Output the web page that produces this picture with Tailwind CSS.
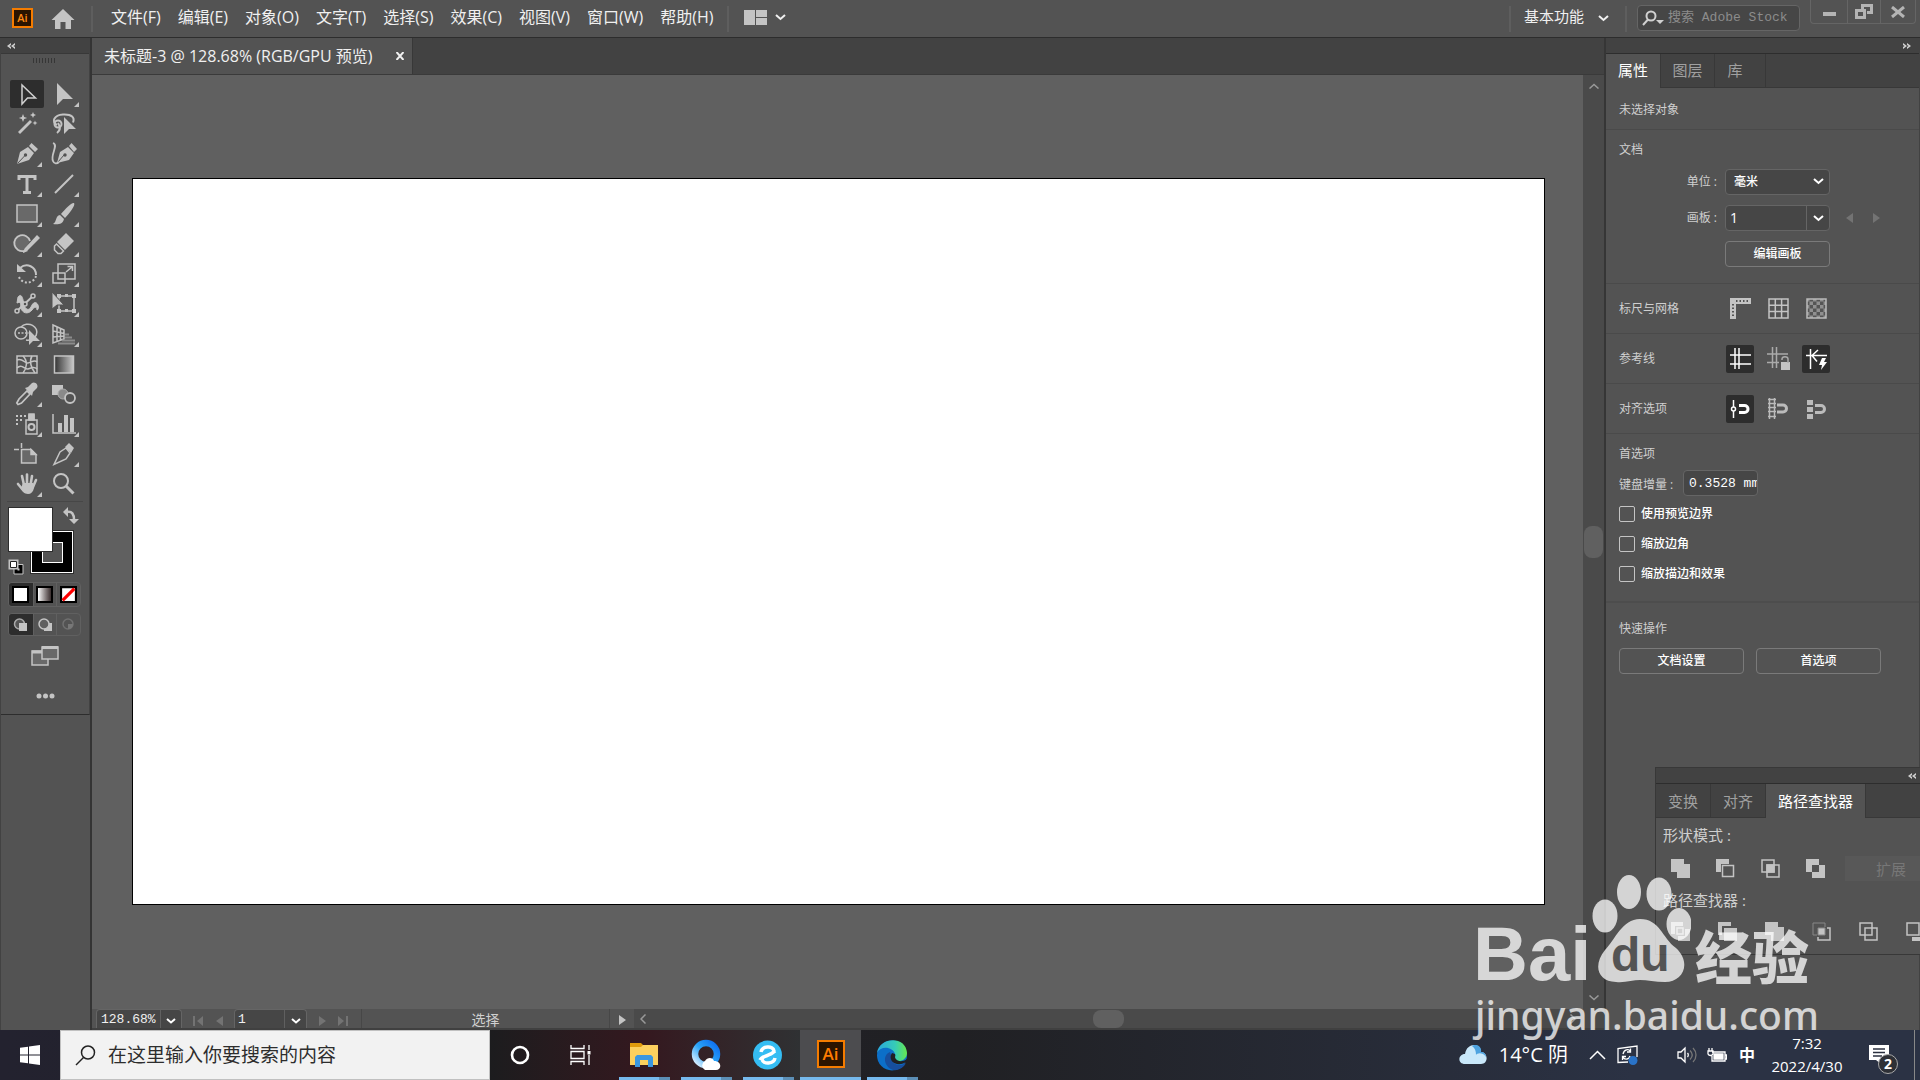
<!DOCTYPE html>
<html lang="zh-CN">
<head>
  <meta charset="UTF-8" />
  <meta name="viewport" content="width=device-width, initial-scale=1" />
  <title>未标题-3 - Adobe Illustrator</title>
  <script src="https://cdn.jsdelivr.net/npm/@tailwindcss/browser@4"></script>
</head>
<body class="h-screen overflow-hidden flex flex-col bg-[#535353] text-[#f0f0f0] font-['Open_Sans','Noto_Sans_CJK_SC',sans-serif] text-[15px] leading-5">

  <!-- Menu bar -->
  <header class="h-[38px] shrink-0 flex items-center border-b border-[#2d2d2d] bg-[#535353] relative">
    <div class="ml-3 mb-px w-[21px] h-5 border-2 border-[#f57c00] bg-[#2b1400] text-[#ff8b14] text-[11px] leading-4 font-semibold text-center">Ai</div>
    <button class="ml-[18px]" aria-label="主页">
      <svg width="24" height="22" viewBox="0 0 24 22" fill="#c4c4c4"><path d="M12 1 0.500 12H4v9h5.500v-7h5v7H20v-9h3.500z"/></svg>
    </button>
    <div class="ml-[16px] w-[2px] h-[26px] bg-[#5e5e5e]"></div>
    <nav class="ml-[18px] mb-1 flex gap-[17px] whitespace-nowrap text-base leading-5">
      <a href="#">文件(F)</a>
      <a href="#">编辑(E)</a>
      <a href="#">对象(O)</a>
      <a href="#">文字(T)</a>
      <a href="#">选择(S)</a>
      <a href="#">效果(C)</a>
      <a href="#">视图(V)</a>
      <a href="#">窗口(W)</a>
      <a href="#">帮助(H)</a>
    </nav>
    <div class="ml-[14px] w-[2px] h-[26px] bg-[#5e5e5e]"></div>
    <button class="ml-[15px] mb-[2px] flex items-center gap-2" aria-label="排列文档">
      <svg width="23" height="15" viewBox="0 0 23 15" fill="#c4c4c4"><path d="M0 0h11v15H0zM12 0h11v7H12zM12 8h11v7H12z"/></svg>
      <svg width="11" height="7" viewBox="0 0 11 7" fill="none" stroke="#f0f0f0" stroke-width="2"><path d="m1 1 4.500 4L10 1"/></svg>
    </button>
    <div class="ml-auto mr-[13px] w-[2px] h-[26px] bg-[#5e5e5e]"></div>
    <button class="mb-[6px] flex items-center gap-[14px]">
      <span>基本功能</span>
      <svg class="mt-[6px]" width="11" height="7" viewBox="0 0 11 7" fill="none" stroke="#f0f0f0" stroke-width="2"><path d="m1 1 4.500 4L10 1"/></svg>
    </button>
    <div class="ml-4 w-[2px] h-[26px] bg-[#5e5e5e]"></div>
    <label class="ml-[10px] mb-px w-[163px] h-[26px] flex items-center gap-1 rounded border border-[#656565] bg-[#464646] px-1">
      <svg class="shrink-0" width="22" height="16" viewBox="0 0 22 16" fill="none" stroke="#d0d0d0" stroke-width="2"><circle cx="9" cy="6" r="4.500"/><path d="M6 9.500 1 15"/><path d="M14 10h8l-4 4z" fill="#d0d0d0" stroke="none"/></svg>
      <input type="text" placeholder="搜索 Adobe Stock" class="min-w-0 flex-1 outline-none bg-transparent text-[13px] placeholder:text-[#8c8c8c] font-['Liberation_Mono','Noto_Sans_CJK_SC',monospace]" />
    </label>
    <div class="ml-[10px] mr-1 self-start flex h-6 rounded-b border border-t-0 border-[#656565]">
      <button class="w-9 flex justify-center items-center" aria-label="最小化"><span class="mt-1 w-[13px] h-1 bg-[#b4b4b4]"></span></button>
      <button class="w-[34px] flex justify-center items-center border-x border-[#656565]" aria-label="还原">
        <svg width="18" height="15" viewBox="0 0 18 15" fill="none" stroke="#b4b4b4" stroke-width="3"><path d="M7.500 5V1.500h9v7H12M1.500 6.500h8v7h-8z"/></svg>
      </button>
      <button class="w-[34px] flex justify-center items-center" aria-label="关闭">
        <svg width="14" height="12" viewBox="0 0 14 12" fill="none" stroke="#b4b4b4" stroke-width="3"><path d="m1 1 12 10M13 1 1 11"/></svg>
      </button>
    </div>
  </header>

  <div class="flex-1 min-h-0 flex relative">

    <!-- Tool panel -->
    <aside class="w-[92px] shrink-0 border-r-2 border-[#343434] bg-[#535353] flex flex-col border-l border-l-[#424242]">
      <div class="border-r border-[#424242] border-b border-b-[#2d2d2d] pb-0">
        <div class="h-4 bg-[#424242] border-b border-[#383838] flex items-center pl-[6px]">
          <svg width="8" height="6" viewBox="0 0 8 6" fill="#d0d0d0"><path d="M4 0v2L2.500 3 4 4v2L0 3zM8 0v2L6.500 3 8 4v2L4 3z"/></svg>
        </div>
        <div class="h-[25px] flex justify-center pt-1">
          <svg width="24" height="6"><path d="M0.500 0v5M3.500 0v5M6.500 0v5M9.500 0v5M12.500 0v5M15.500 0v5M18.500 0v5M21.500 0v5" stroke="#363636"/></svg>
        </div>

        <div class="grid grid-cols-2 auto-rows-[30px] px-[7px]">
          <button class="relative flex items-center justify-center" aria-label="选择工具">
            <span class="w-[34px] h-7 rounded-xs bg-[#2d2d2d] flex items-center justify-center">
              <svg width="26" height="26" viewBox="0 0 26 26" fill="none" stroke="#d0d0d0" stroke-width="1.500"><path d="M8 4v19l5.500-6h8z"/></svg>
            </span>
          </button>
          <button class="relative flex items-center justify-center" aria-label="直接选择工具">
            <svg width="26" height="26" viewBox="0 0 26 26" fill="#c4c4c4"><path d="M6 2v22l6-6h10z"/></svg>
            <svg class="absolute right-[3px] bottom-[2px]" width="5" height="5" fill="#c4c4c4"><path d="M5 0v5H0z"/></svg>
          </button>

          <button class="relative flex items-center justify-center" aria-label="魔棒工具">
            <svg width="26" height="26" viewBox="0 0 26 26" fill="#c4c4c4"><path d="m4 21 12-12 2 2L6 23z"/><path d="m9 3 1.200 3 3 1-3 1L9 11 7.800 8l-3-1 3-1zM19 1l.9 2.100 2.100.9-2.100.9L19 7l-.9-2.100L16 4l2.100-.9zM21 9.500l.7 1.800 1.800.7-1.800.7-.7 1.800-.7-1.800-1.800-.7 1.800-.7z"/></svg>
          </button>
          <button class="relative flex items-center justify-center" aria-label="套索工具">
            <svg width="28" height="26" viewBox="0 0 28 26" fill="none" stroke="#c4c4c4" stroke-width="2"><path d="M7 14C1 11 4 4 13 3.500s12 3 10 8"/><circle cx="8" cy="13" r="3.500"/><path d="M8 12c2 3 3 7-1 10"/><path d="M14 6v17l5-5h7z" fill="#c4c4c4" stroke="none"/></svg>
          </button>

          <button class="relative flex items-center justify-center" aria-label="钢笔工具">
            <svg width="26" height="26" viewBox="0 0 26 26" fill="#c4c4c4"><path d="m3 23 3-12 8-5 6 6-5 7zM15 5l2.500-3 6.500 6-3 3z"/><path d="m3.500 22.500 7.500-8" stroke="#535353"/><circle cx="11.500" cy="14" r="1.700" fill="#535353"/></svg>
            <svg class="absolute right-[3px] bottom-[2px]" width="5" height="5" fill="#c4c4c4"><path d="M5 0v5H0z"/></svg>
          </button>
          <button class="relative flex items-center justify-center" aria-label="曲率工具">
            <svg width="28" height="26" viewBox="0 0 28 26" fill="#c4c4c4"><path d="m7 22 3-11 8-5 6 6-5 7zM19 5l2.500-3 5.500 6-3 3z"/><path d="m8 21 6-7" stroke="#535353"/><circle cx="15" cy="14" r="1.700" fill="#535353"/><path d="M3 2c6 2-3 12 0 18 1 3 4 3 6 1" fill="none" stroke="#c4c4c4" stroke-width="1.800"/></svg>
          </button>

          <button class="relative flex items-center justify-center" aria-label="文字工具">
            <svg width="26" height="26" viewBox="0 0 26 26" fill="none" stroke="#c4c4c4" stroke-width="3"><path d="M5 9V5.500h16V9M13 5v16M9 21.500h8"/></svg>
            <svg class="absolute right-[3px] bottom-[2px]" width="5" height="5" fill="#c4c4c4"><path d="M5 0v5H0z"/></svg>
          </button>
          <button class="relative flex items-center justify-center" aria-label="直线段工具">
            <svg width="26" height="26" viewBox="0 0 26 26" stroke="#c4c4c4" stroke-width="2"><path d="M4 22 22 4"/></svg>
            <svg class="absolute right-[3px] bottom-[2px]" width="5" height="5" fill="#c4c4c4"><path d="M5 0v5H0z"/></svg>
          </button>

          <button class="relative flex items-center justify-center" aria-label="矩形工具">
            <svg width="26" height="26" viewBox="0 0 26 26" fill="#696969" stroke="#c4c4c4" stroke-width="1.500"><path d="M3 4h20v17H3z"/></svg>
            <svg class="absolute right-[3px] bottom-[2px]" width="5" height="5" fill="#c4c4c4"><path d="M5 0v5H0z"/></svg>
          </button>
          <button class="relative flex items-center justify-center" aria-label="画笔工具">
            <svg width="26" height="26" viewBox="0 0 26 26" fill="#c4c4c4"><path d="M23 2c2 2-5 11-9 15l-4-4C14 8 21 1 23 2zM9 14l4 4c-1 5-6 6-11 5 4-2 2-8 7-9z"/></svg>
            <svg class="absolute right-[3px] bottom-[2px]" width="5" height="5" fill="#c4c4c4"><path d="M5 0v5H0z"/></svg>
          </button>

          <button class="relative flex items-center justify-center" aria-label="Shaper 工具">
            <svg width="30" height="26" viewBox="0 0 30 26" fill="#696969" stroke="#c4c4c4" stroke-width="1.800"><path d="M12 20a8 8 0 1 1 6-10"/><path d="m11 22 2-5L25 4l3 3-12 12z" fill="#c4c4c4" stroke="none"/><path d="m11 22 2-5 3 3z" fill="#c4c4c4" stroke="none"/></svg>
            <svg class="absolute right-[3px] bottom-[2px]" width="5" height="5" fill="#c4c4c4"><path d="M5 0v5H0z"/></svg>
          </button>
          <button class="relative flex items-center justify-center" aria-label="橡皮擦工具">
            <svg width="26" height="26" viewBox="0 0 26 26" fill="#c4c4c4"><path d="M15 2 23 10 14 19 6 11z"/><path d="m5.500 13 7 7-2.500 2.500H7L3.500 19v-4z" fill="none" stroke="#c4c4c4" stroke-width="1.500"/></svg>
            <svg class="absolute right-[3px] bottom-[2px]" width="5" height="5" fill="#c4c4c4"><path d="M5 0v5H0z"/></svg>
          </button>

          <button class="relative flex items-center justify-center" aria-label="旋转工具">
            <svg width="26" height="26" viewBox="0 0 26 26" fill="none" stroke="#c4c4c4" stroke-width="2"><path d="M6 7c7-6 16-1 16 7"/><path d="M3 3v8h9z" fill="#c4c4c4" stroke="none"/><path d="M22 15a9 9 0 0 1-17 1" stroke-dasharray="2 2"/></svg>
            <svg class="absolute right-[3px] bottom-[2px]" width="5" height="5" fill="#c4c4c4"><path d="M5 0v5H0z"/></svg>
          </button>
          <button class="relative flex items-center justify-center" aria-label="比例缩放工具">
            <svg width="26" height="26" viewBox="0 0 26 26" fill="none" stroke="#c4c4c4" stroke-width="1.500"><path d="M7 3h17v15H7z"/><path d="M2 12h12v10H2zM15 11l6-5M16.500 5.500H21.500V10"/></svg>
            <svg class="absolute right-[3px] bottom-[2px]" width="5" height="5" fill="#c4c4c4"><path d="M5 0v5H0z"/></svg>
          </button>

          <button class="relative flex items-center justify-center" aria-label="宽度工具">
            <svg width="26" height="26" viewBox="0 0 26 26" fill="none" stroke="#c4c4c4" stroke-width="2"><path d="M4 6c4-5 5 3 6 7 1 6 5 7 7 3 2-5 5-6 7-2 1 3 0 5-1 5 0-4-3-3-5 0-4 5-10 3-11-2-1-3 1-7-4-5z" fill="#c4c4c4" stroke-width="1"/><path d="m3 20 16-15"/><circle cx="3" cy="20" r="2" fill="#535353" stroke-width="1.500"/><circle cx="19" cy="5" r="2" fill="#535353" stroke-width="1.500"/><circle cx="11" cy="13" r="2" fill="#535353" stroke-width="1.500"/></svg>
            <svg class="absolute right-[3px] bottom-[2px]" width="5" height="5" fill="#c4c4c4"><path d="M5 0v5H0z"/></svg>
          </button>
          <button class="relative flex items-center justify-center" aria-label="自由变换工具">
            <svg width="28" height="26" viewBox="0 0 28 26" fill="none" stroke="#c4c4c4" stroke-width="1.500"><path d="M9 5h15v15H9z"/><path d="M7 3h4v4H7zM22 3h4v4h-4zM22 18h4v4h-4zM7 18h4v4H7zM15 3h3v3h-3zM15 18h3v3h-3z" fill="#c4c4c4" stroke="none"/><path d="M2 1v17l5-4h7z" fill="#c4c4c4" stroke="#535353" stroke-width="1"/></svg>
            <svg class="absolute right-[3px] bottom-[2px]" width="5" height="5" fill="#c4c4c4"><path d="M5 0v5H0z"/></svg>
          </button>

          <button class="relative flex items-center justify-center" aria-label="形状生成器工具">
            <svg width="28" height="26" viewBox="0 0 28 26" fill="none" stroke="#c4c4c4" stroke-width="1.500"><path d="M8 6a9 8 0 1 1 5 13"/><circle cx="8" cy="12" r="6"/><path d="M5 12h12" stroke-dasharray="2 1.500"/><path d="M16 9v15l4-4h7z" fill="#c4c4c4" stroke="none"/></svg>
            <svg class="absolute right-[3px] bottom-[2px]" width="5" height="5" fill="#c4c4c4"><path d="M5 0v5H0z"/></svg>
          </button>
          <button class="relative flex items-center justify-center" aria-label="透视网格工具">
            <svg width="28" height="26" viewBox="0 0 28 26" fill="none" stroke="#c4c4c4" stroke-width="1.500"><path d="M3 4v18l11-4V9zM3 10l11 2.500M3 16l11-1M7 5.500v15M10.500 7v12"/><path d="M15 13.500h4M15 16.500h7" stroke="#8c8c8c" stroke-width="2"/><path d="M12 19.500h13M8 22.500h17" stroke="#8c8c8c" stroke-width="2"/></svg>
            <svg class="absolute right-[3px] bottom-[2px]" width="5" height="5" fill="#c4c4c4"><path d="M5 0v5H0z"/></svg>
          </button>

          <button class="relative flex items-center justify-center" aria-label="网格工具">
            <svg width="26" height="26" viewBox="0 0 26 26" fill="none" stroke="#c4c4c4" stroke-width="1.500"><path d="M3 5h20v17H3z"/><path d="M9 5c5 5 4 12 0 17M18 5c-3 5-1 12 3 17M3 9c5-2 8 3 11 3s6-4 9-1M3 17c5-5 8 2 11 1s6-3 9 0"/></svg>
          </button>
          <button class="relative flex items-center justify-center" aria-label="渐变工具">
            <svg width="26" height="26" viewBox="0 0 26 26"><defs><linearGradient id="grad"><stop stop-color="#333"/><stop offset="1" stop-color="#c8c8c8"/></linearGradient></defs><path d="M3.500 5h19v17h-19z" fill="url(#grad)" stroke="#c4c4c4" stroke-width="1.500"/></svg>
          </button>

          <button class="relative flex items-center justify-center" aria-label="吸管工具">
            <svg width="26" height="26" viewBox="0 0 26 26" fill="#c4c4c4"><path d="m13 10 3 3-8.500 9L4 23.500 2.800 22 5 18z" fill="none" stroke="#c4c4c4" stroke-width="1.700"/><path d="m11 7 3-1 4-4c3-2 7 2 5 5l-4 4-1 4z"/></svg>
            <svg class="absolute right-[3px] bottom-[2px]" width="5" height="5" fill="#c4c4c4"><path d="M5 0v5H0z"/></svg>
          </button>
          <button class="relative flex items-center justify-center" aria-label="混合工具">
            <svg width="26" height="26" viewBox="0 0 26 26"><path d="M1 4h11v10H1z" fill="#c4c4c4"/><circle cx="12" cy="13" r="5" fill="#8a8a8a" stroke="#aaa"/><circle cx="19" cy="17" r="5" fill="#535353" stroke="#c4c4c4" stroke-width="1.800"/></svg>
          </button>

          <button class="relative flex items-center justify-center" aria-label="符号喷枪工具">
            <svg width="26" height="26" viewBox="0 0 26 26" fill="none" stroke="#c4c4c4" stroke-width="1.500"><path d="M12 9h11v14H12zM15 9V4h5v5"/><path d="M15 3h5v6h-5z" fill="#c4c4c4"/><circle cx="17.500" cy="16" r="3" stroke-width="2"/><path d="M2 5h10M2 9h7M2 13h3" stroke-width="2" stroke-dasharray="2 2"/></svg>
            <svg class="absolute right-[3px] bottom-[2px]" width="5" height="5" fill="#c4c4c4"><path d="M5 0v5H0z"/></svg>
          </button>
          <button class="relative flex items-center justify-center" aria-label="柱形图工具">
            <svg width="26" height="26" viewBox="0 0 26 26" fill="#c4c4c4"><path d="M2 3v19h23" fill="none" stroke="#c4c4c4" stroke-width="1.500"/><path d="M7 12h4v9H7zM13 4h4v17h-4zM19 7h4v14h-4z"/></svg>
            <svg class="absolute right-[3px] bottom-[2px]" width="5" height="5" fill="#c4c4c4"><path d="M5 0v5H0z"/></svg>
          </button>

          <button class="relative flex items-center justify-center" aria-label="画板工具">
            <svg width="26" height="26" viewBox="0 0 26 26" fill="none" stroke="#c4c4c4" stroke-width="1.500"><path d="M7.500 8.500H17l5 5V22H7.500z" fill="#696969"/><path d="M7.500 2v5M0 8.500h5"/><path d="M17 8.500v5h5z" fill="#c4c4c4"/></svg>
          </button>
          <button class="relative flex items-center justify-center" aria-label="切片工具">
            <svg width="26" height="26" viewBox="0 0 26 26" fill="#c4c4c4"><path d="M15 7 9 11 3 23.500 15 18l4-6z" fill="none" stroke="#c4c4c4" stroke-width="1.500"/><path d="m14 6 4-4 5 5-3 5z"/></svg>
            <svg class="absolute right-[3px] bottom-[2px]" width="5" height="5" fill="#c4c4c4"><path d="M5 0v5H0z"/></svg>
          </button>

          <button class="relative flex items-center justify-center" aria-label="抓手工具">
            <svg width="26" height="26" viewBox="0 0 26 26" fill="none" stroke="#c4c4c4" stroke-width="2.600" stroke-linecap="round"><path d="m10 14-2-9M13 13V3.500M16.500 14l1.500-9M19 16l3-7M9 19l-5-6"/><path d="M9 12h10l1 5c-1 4-3 6-6 6-4 0-6-3-7-6z" fill="#c4c4c4" stroke="none"/></svg>
            <svg class="absolute right-[3px] bottom-[2px]" width="5" height="5" fill="#c4c4c4"><path d="M5 0v5H0z"/></svg>
          </button>
          <button class="relative flex items-center justify-center" aria-label="缩放工具">
            <svg width="26" height="26" viewBox="0 0 26 26" fill="none" stroke="#c4c4c4" stroke-width="2"><circle cx="10" cy="10" r="7"/><path d="m15 15 7.500 7.500" stroke-width="3"/></svg>
          </button>
        </div>

        <div class="mx-[6px] mt-[2px] border-t border-[#474747]"></div>

        <!-- Fill and stroke swatches overlap each other -->
        <div class="relative h-[74px] ml-[7px] mt-[5px]">
          <button class="absolute left-[22px] top-[23px] size-11 border border-[#2d2d2d] bg-black flex items-center justify-center outline outline-white -outline-offset-2" aria-label="描边">
            <span class="size-[21px] border border-white bg-[#535353]"></span>
          </button>
          <button class="absolute left-0 top-0 size-[45px] bg-white border border-[#2d2d2d]" aria-label="填色"></button>
          <button class="absolute left-[55px] top-0" aria-label="互换填色和描边">
            <svg width="16" height="17" viewBox="0 0 16 17" fill="#c4c4c4"><path d="M0 5 5 0v10zM6 12h10l-5 5z"/><path d="M4 5c5-1 7 2 7 8" fill="none" stroke="#c4c4c4" stroke-width="2.500"/></svg>
          </button>
          <button class="absolute left-0 top-[52px]" aria-label="默认填色和描边">
            <svg width="16" height="16" viewBox="0 0 16 16"><path d="M6 5.500h9v9.500H6z" fill="#000" stroke="#c4c4c4"/><path d="M7 7h7v7H7z" fill="#000"/><path d="M9.500 9.500h2v2h-2z" fill="#c4c4c4"/><path d="M1.500 1.500h8v8h-8z" fill="#fff" stroke="#c4c4c4" stroke-width="2"/><path d="M2.500 2.500h6v6h-6z" fill="#fff" stroke="#222"/></svg>
          </button>
        </div>
        <div class="ml-[7px] mt-[1px] w-[73px] h-[25px] grid grid-cols-3 rounded border border-[#606060] overflow-hidden">
          <button class="bg-[#2d2d2d] flex items-center justify-center" aria-label="颜色"><span class="size-[17px] border-2 border-black bg-white"></span></button>
          <button class="flex items-center justify-center border-l border-[#606060]" aria-label="渐变"><span class="size-[17px] border-2 border-black bg-linear-to-r from-white to-[#3a2f2f]"></span></button>
          <button class="flex items-center justify-center border-l border-[#606060]" aria-label="无">
            <svg width="17" height="17" viewBox="0 0 16 16"><path d="M1 1h14v14H1z" fill="#fff" stroke="#000" stroke-width="2"/><path d="M2.500 13.500l11-11" stroke="#f00" stroke-width="3"/></svg>
          </button>
        </div>
        <div class="ml-[7px] mt-[6px] w-[73px] h-[23px] grid grid-cols-3 rounded border border-[#606060] overflow-hidden">
          <button class="bg-[#2d2d2d] flex items-center justify-center" aria-label="正常绘图"><svg width="16" height="16" viewBox="0 0 16 16"><circle cx="6.500" cy="7" r="5" fill="#555" stroke="#aaa" stroke-width="1.500"/><path d="M6 6h8v8H6z" fill="#c4c4c4"/></svg></button>
          <button class="flex items-center justify-center border-l border-[#606060]" aria-label="背面绘图"><svg width="16" height="16" viewBox="0 0 16 16"><path d="M7 6h8v8H7z" fill="#c4c4c4"/><circle cx="7" cy="7" r="5" fill="#606060" stroke="#c4c4c4" stroke-width="1.500"/></svg></button>
          <button class="flex items-center justify-center border-l border-[#606060]" aria-label="内部绘图"><svg width="16" height="16" viewBox="0 0 16 16"><circle cx="7" cy="7" r="5" fill="none" stroke="#707070" stroke-width="1.500"/><path d="M7 7h5c0 3-2 5-5 5z" fill="#777"/></svg></button>
        </div>
        <button class="mt-[9px] flex ml-[30px]" aria-label="更改屏幕模式">
          <svg width="28" height="22" viewBox="0 0 28 22" fill="#696969" stroke="#c4c4c4" stroke-width="1.500"><path d="M1 6h16v14H1z"/><path d="M1 7h16" stroke-width="3"/><path d="M11 2h16v12H11z"/><path d="M11 2.500h16" stroke-width="3"/></svg>
        </button>
        <button class="mt-[26px] mb-[15px] ml-[35px] flex" aria-label="编辑工具栏">
          <svg width="20" height="6" fill="#c4c4c4"><circle cx="3" cy="3" r="2.500"/><circle cx="9.500" cy="3" r="2.500"/><circle cx="16" cy="3" r="2.500"/></svg>
        </button>
      </div>
    </aside>

    <!-- Document window -->
    <main class="flex-1 min-w-0 flex flex-col">
      <div class="h-[37px] shrink-0 flex bg-[#424242] border-b border-[#3a3a3a]">
        <div class="flex items-center w-[321px] pl-3 pr-2 bg-[#535353] border-r border-[#383838]">
          <span class="whitespace-nowrap text-base leading-5">未标题-3 @ 128.68% (RGB/GPU 预览)</span>
          <button class="ml-auto" aria-label="关闭文档"><svg width="8" height="8" viewBox="0 0 8 8" stroke="#f0f0f0" stroke-width="2"><path d="m0.500 0 7 8M7.500 0l-7 8"/></svg></button>
        </div>
      </div>
      <div class="flex-1 min-h-0 flex">
        <div class="flex-1 bg-[#606060] flex pt-[103px] pb-[104px] pl-10 pr-[38px]">
          <div class="flex-1 bg-white border border-black"></div>
        </div>
        <div class="w-[21px] bg-[#4a4a4a] flex flex-col items-center justify-between pt-2 pb-2">
          <svg width="10" height="6" viewBox="0 0 10 6" fill="none" stroke="#999" stroke-width="1.500"><path d="m0.500 5.500 4.500-4 4.500 4"/></svg>
          <span class="w-[19px] h-8 rounded-lg bg-[#606060]"></span>
          <svg width="10" height="6" viewBox="0 0 10 6" fill="none" stroke="#999" stroke-width="1.500"><path d="m0.500 0.500 4.500 4 4.500-4"/></svg>
        </div>
      </div>
      <div class="h-[21px] shrink-0 flex items-stretch bg-[#535353] border-b-2 border-[#404040] text-[13px] leading-5">
        <div class="ml-1 w-[86px] flex border border-b-0 border-[#656565] rounded-t bg-[#464646]">
          <input type="text" value="128.68%" aria-label="缩放" class="w-[63px] pl-1 pt-[2px] outline-none font-['Liberation_Mono',monospace]" />
          <button class="flex-1 flex items-end pb-1 justify-center border-l border-[#606060]" aria-label="缩放级别"><svg width="10" height="6" viewBox="0 0 10 6" fill="none" stroke="#fff" stroke-width="2"><path d="m1 1 4 3.500L9 1"/></svg></button>
        </div>
        <button class="ml-[11px] pt-1" aria-label="首项"><svg width="11" height="10" viewBox="0 0 11 10" fill="#737373"><path d="M0 0h2v10H0zM10 0v10L4 5z"/></svg></button>
        <button class="ml-3 pt-1" aria-label="上一项"><svg width="7" height="10" fill="#737373"><path d="M7 0v10L0 5z"/></svg></button>
        <div class="ml-[11px] w-[73px] flex border border-b-0 border-[#656565] rounded-t bg-[#464646]">
          <input type="text" value="1" aria-label="画板导航" class="w-[49px] px-[3px] pt-[2px] outline-none font-['Liberation_Mono',monospace]" />
          <button class="flex-1 flex items-end pb-1 justify-center border-l border-[#606060]" aria-label="选择画板"><svg width="10" height="6" viewBox="0 0 10 6" fill="none" stroke="#fff" stroke-width="2"><path d="m1 1 4 3.500L9 1"/></svg></button>
        </div>
        <button class="ml-3 pt-1" aria-label="下一项"><svg width="7" height="10" fill="#737373"><path d="M0 0v10l7-5z"/></svg></button>
        <button class="ml-[11px] pt-1" aria-label="末项"><svg width="11" height="10" viewBox="0 0 11 10" fill="#737373"><path d="M9 0h2v10H9zM1 0v10l6-5z"/></svg></button>
        <div class="ml-[13px] w-[249px] border-x border-[#474747] text-center text-[#d0d0d0] text-[14px] leading-[22px]">选择</div>
        <button class="w-6 flex items-center justify-center pt-[2px]" aria-label="状态栏菜单"><svg width="7" height="10" fill="#c4c4c4"><path d="M0 0v10l7-5z"/></svg></button>
        <div class="flex-1 bg-[#4a4a4a] flex items-center justify-between pl-[6px] pr-7">
          <svg width="6" height="10" viewBox="0 0 6 10" fill="none" stroke="#999" stroke-width="1.500"><path d="M5.500 0.500 1 5l4.500 4.500"/></svg>
          <span class="w-[31px] h-[18px] rounded-lg bg-[#606060]"></span>
          <svg width="6" height="10" viewBox="0 0 6 10" fill="none" stroke="#999" stroke-width="1.500"><path d="M0.500 0.500 5 5 0.500 9.500"/></svg>
        </div>
      </div>
    </main>

    <!-- Properties panel -->
    <aside class="w-[316px] shrink-0 border-l-2 border-[#363636] border-r border-r-[#424242] text-xs leading-5 text-[#cfcfcf]">
      <div class="h-4 flex items-center justify-end pr-2 bg-[#424242] border-b border-[#2d2d2d]">
        <svg width="8" height="6" viewBox="0 0 8 6" fill="#d0d0d0"><path d="M0 0v2l1.500 1L0 4v2l4-3zM4 0v2l1.500 1L4 4v2l4-3z"/></svg>
      </div>
      <div class="h-[34px] flex bg-[#424242] text-[15px] text-[#a0a0a0]">
        <button class="w-[54px] pb-[2px] bg-[#535353] text-white">属性</button>
        <button class="w-[54px] pb-[2px] border-l border-b border-[#383838]">图层</button>
        <button class="w-[52px] pb-[2px] border-x border-b border-[#383838] pr-[10px]">库</button>
        <div class="flex-1 border-b border-[#383838]"></div>
      </div>

      <div class="h-[42px] px-[13px] pt-[3px] flex items-center border-b border-[#4a4a4a]">未选择对象</div>

      <section class="px-[13px] pt-[10px] pb-4 border-b border-[#4a4a4a]">
        <h2>文档</h2>
        <div class="mt-[9px] flex items-center h-[26px]">
          <label for="unit" class="w-[106px] pr-2 text-right shrink-0">单位 :</label>
          <div class="relative w-[105px]">
            <select id="unit" class="w-full h-[26px] appearance-none rounded border border-[#656565] bg-[#464646] pl-2 text-white font-medium"><option>毫米</option></select>
            <svg class="absolute right-[6px] top-[9px]" width="11" height="7" viewBox="0 0 11 7" fill="none" stroke="#fff" stroke-width="2"><path d="m1 1 4.500 4L10 1"/></svg>
          </div>
        </div>
        <div class="mt-[10px] flex items-center h-[26px]">
          <label for="artboard" class="w-[106px] pr-2 text-right shrink-0">画板 :</label>
          <div class="w-[105px] h-[26px] flex rounded border border-[#656565] bg-[#464646]">
            <input id="artboard" type="text" value="1" class="w-20 px-1 outline-none text-white text-sm" />
            <button class="flex-1 flex items-center justify-center border-l border-[#656565]" aria-label="画板列表"><svg width="11" height="7" viewBox="0 0 11 7" fill="none" stroke="#fff" stroke-width="2"><path d="m1 1 4.500 4L10 1"/></svg></button>
          </div>
          <button class="ml-4" aria-label="上一画板"><svg width="8" height="10" fill="#737373"><path d="M7 0v10L0 5z"/></svg></button>
          <button class="ml-[19px]" aria-label="下一画板"><svg width="8" height="10" fill="#737373"><path d="M0 0v10l7-5z"/></svg></button>
        </div>
        <button class="mt-[10px] ml-[106px] w-[105px] h-[26px] rounded border border-[#7a7a7a] text-white font-medium">编辑画板</button>
      </section>

      <section class="h-[50px] px-[13px] flex items-center border-b border-[#4a4a4a]">
        <h2 class="w-[107px]">标尺与网格</h2>
        <div class="flex gap-[10px]">
          <button class="size-7 flex items-center justify-center" aria-label="标尺"><svg width="21" height="21" viewBox="0 0 21 21"><path d="M0 0h21v6H6v15H0z" fill="#c4c4c4"/><path d="M6 3h14M3 6v14" stroke="#535353" stroke-width="2" stroke-dasharray="1.500 2"/></svg></button>
          <button class="size-7 flex items-center justify-center" aria-label="网格"><svg width="21" height="21" viewBox="0 0 21 21" fill="none" stroke="#c4c4c4" stroke-width="1.500"><path d="M1 1h19v19H1zM1 7.300h19M1 13.600h19M7.300 1v19M13.600 1v19"/></svg></button>
          <button class="size-7 flex items-center justify-center" aria-label="透明度网格"><svg width="21" height="21" viewBox="0 0 21 21"><defs><pattern id="checks" width="7" height="7" patternUnits="userSpaceOnUse"><path d="M0 0h7v7H0z" fill="#555"/><path d="M0 0h3.500v3.500H0zM3.500 3.500H7V7H3.500z" fill="#909090"/></pattern></defs><path d="M1 1h19v19H1z" fill="url(#checks)" stroke="#bbb" stroke-width="1.500"/></svg></button>
        </div>
      </section>
      <section class="h-[50px] px-[13px] flex items-center border-b border-[#4a4a4a]">
        <h2 class="w-[107px]">参考线</h2>
        <div class="flex gap-[10px]">
          <button class="size-7 rounded-xs bg-[#2d2d2d] flex items-center justify-center" aria-label="显示参考线"><svg width="21" height="21" viewBox="0 0 21 21" stroke="#fff" stroke-width="1.500"><path d="M5 0v21M9 0v21M0 7h21M0 16h21"/></svg></button>
          <button class="size-7 flex items-center justify-center" aria-label="锁定参考线"><svg width="23" height="23" viewBox="0 0 23 23" fill="none" stroke="#aaa" stroke-width="1.500"><path d="M5.500 0v21M9.500 0v21M0 7h21M0 15.500h12"/><path d="M14 15h9v8h-9z" fill="#c4c4c4" stroke="none"/><path d="M15 13v-1c0-3 6-3 6 0v4" /></svg></button>
          <button class="size-7 rounded-xs bg-[#2d2d2d] flex items-center justify-center" aria-label="智能参考线"><svg width="23" height="22" viewBox="0 0 23 22" fill="none" stroke="#fff" stroke-width="1.500"><path d="M5.500 1v20M1 7.500h21M13 2 7 7.500l5 6"/><path d="m17 10-3 7h3l-1 5 6-8h-3l2-4z" fill="#fff" stroke="none"/></svg></button>
        </div>
      </section>
      <section class="h-[50px] px-[13px] flex items-center border-b border-[#4a4a4a]">
        <h2 class="w-[107px]">对齐选项</h2>
        <div class="flex gap-[10px]">
          <button class="size-7 rounded-xs bg-[#2d2d2d] flex items-center justify-center" aria-label="对齐点"><svg width="20" height="20" viewBox="0 0 20 20" fill="none" stroke="#fff"><path d="M3.500 1v18" stroke-width="1.500"/><circle cx="3.500" cy="10" r="2" fill="#2d2d2d" stroke-width="1.500"/><path d="M9 6.500h5.500a3.500 3.500 0 0 1 0 7H9" stroke-width="3"/></svg></button>
          <button class="size-7 flex items-center justify-center" aria-label="对齐网格"><svg width="21" height="21" viewBox="0 0 21 21" fill="none" stroke="#bbb"><path d="M1.500 0v21M6.500 0v21M0 1.500h8M0 5.500h8M0 9.500h8M0 13.500h8M0 18.500h8" stroke-width="1.500"/><path d="M9 7h6a3.500 3.500 0 0 1 0 7H9" stroke-width="3"/></svg></button>
          <button class="size-7 flex items-center justify-center" aria-label="对齐像素"><svg width="20" height="20" viewBox="0 0 20 20" fill="none" stroke="#bbb"><path d="M1 1h6v5H1zM1 8h6v5H1zM1 15h6v5H1z" fill="#bbb" stroke="none"/><path d="M9 6.500h6a3.500 3.500 0 0 1 0 7H9" stroke-width="3"/></svg></button>
        </div>
      </section>

      <section class="px-[13px] pt-[10px] pb-[17px] border-b-2 border-[#4d4d4d]">
        <h2>首选项</h2>
        <div class="mt-[6px] mb-2 flex items-center h-[26px]">
          <label for="increment" class="w-16 pt-1">键盘增量 :</label>
          <input id="increment" type="text" value="0.3528 mm" class="w-[75px] h-[26px] rounded border border-[#656565] bg-[#464646] pl-[5px] text-white text-[13px] outline-none font-['Liberation_Mono',monospace]" />
        </div>
        <div class="flex flex-col gap-[10px] text-white font-medium">
          <label class="flex items-center gap-[6px]"><input type="checkbox" class="size-4 appearance-none rounded-xs border border-[#c4c4c4]" />使用预览边界</label>
          <label class="flex items-center gap-[6px]"><input type="checkbox" class="size-4 appearance-none rounded-xs border border-[#c4c4c4]" />缩放边角</label>
          <label class="flex items-center gap-[6px]"><input type="checkbox" class="size-4 appearance-none rounded-xs border border-[#c4c4c4]" />缩放描边和效果</label>
        </div>
      </section>

      <section class="px-[13px] pt-4">
        <h2>快速操作</h2>
        <div class="mt-[9px] flex gap-3 text-white font-medium">
          <button class="w-[125px] h-[26px] rounded border border-[#7a7a7a]">文档设置</button>
          <button class="w-[125px] h-[26px] rounded border border-[#7a7a7a]">首选项</button>
        </div>
      </section>
    </aside>

    <!-- Floating pathfinder panel, cut by the right screen edge -->
    <div class="absolute right-0 bottom-[75px] w-[265px] h-[188px] overflow-hidden bg-[#535353] border border-r-0 border-[#383838]">
      <div class="h-4 flex items-center justify-end pr-1 bg-[#424242] border-b border-[#2d2d2d]">
        <svg width="8" height="6" viewBox="0 0 8 6" fill="#d0d0d0"><path d="M4 0v2L2.500 3 4 4v2L0 3zM8 0v2L6.500 3 8 4v2L4 3z"/></svg>
      </div>
      <div class="h-[34px] flex bg-[#424242] text-[#a0a0a0]">
        <button class="w-[55px] border-r border-b border-[#383838]">变换</button>
        <button class="w-[55px] border-r border-b border-[#383838]">对齐</button>
        <button class="w-[99px] bg-[#535353] text-white">路径查找器</button>
        <div class="flex-1 border-l border-b border-[#383838]"></div>
      </div>
      <div class="pl-[7px] pt-[7px] text-[#cfcfcf]">
        <p>形状模式 :</p>
        <div class="mt-[11px] h-[25px] flex items-center gap-[26px] pl-2">
          <button aria-label="联集"><svg width="19" height="19" fill="#c4c4c4"><path d="M0 0h13v5h6v14H6v-6H0z"/></svg></button>
          <button aria-label="减去顶层"><svg width="19" height="19" fill="#c4c4c4"><path d="M0 0h13v5H5v8H0z"/><path d="M6.500 6.500h11v11h-11z" fill="none" stroke="#c4c4c4" stroke-width="1.500"/></svg></button>
          <button aria-label="交集"><svg width="19" height="19" fill="none" stroke="#c4c4c4" stroke-width="1.500"><path d="M1 1h12v12H1zM6 6h12v12H6z"/><path d="M6 6h7v7H6z" fill="#c4c4c4"/></svg></button>
          <button aria-label="差集"><svg width="19" height="19" fill="#c4c4c4" fill-rule="evenodd"><path d="M0 0h13v6h6v13H6v-6H0zM6 6v7h7V6z"/></svg></button>
          <button class="-ml-[6px] w-[92px] shrink-0 h-[25px] bg-[#585858] text-[#777]">扩展</button>
        </div>
        <p class="mt-[9px]">路径查找器 :</p>
        <div class="mt-3 flex gap-7 pl-2">
          <button class="shrink-0" aria-label="分割"><svg width="19" height="19" fill="none" stroke="#c4c4c4" stroke-width="1.500"><path d="M0 0h12v4H4v8H0z" fill="#c4c4c4" stroke="none"/><path d="M6 6h6v6H6z"/><path d="M14 7h5v12H7v-5h7z" fill="#c4c4c4" stroke="none"/></svg></button>
          <button class="shrink-0" aria-label="修边"><svg width="19" height="19" fill="#c4c4c4"><path d="M0 0h13v4H4v9H0zM6 6h13v13H6z"/></svg></button>
          <button class="shrink-0" aria-label="合并"><svg width="19" height="19" fill="#c4c4c4"><path d="M0 0h13v5h6v14H6v-6H0z"/></svg></button>
          <button class="shrink-0" aria-label="裁剪"><svg width="19" height="19" fill="none" stroke="#888"><path d="M1 1h12v4M1 1v12h4"/><path d="M6 6h7v7H6z" fill="#c4c4c4"/><path d="M15 6h3v12H6v-3" stroke="#c4c4c4" stroke-width="1.500"/></svg></button>
          <button class="shrink-0" aria-label="轮廓"><svg width="19" height="19" fill="none" stroke="#c4c4c4" stroke-width="1.500"><path d="M1 1h12v12H1zM6 6h12v12H6z"/></svg></button>
          <button class="shrink-0" aria-label="减去后方对象"><svg width="19" height="19" fill="#c4c4c4"><path d="M15 6h4v13H6v-4h9z"/><path d="M1 1h12v12H1z" fill="none" stroke="#c4c4c4" stroke-width="1.500"/></svg></button>
        </div>
      </div>
    </div>
  </div>

  <!-- Windows taskbar -->
  <footer class="h-[50px] shrink-0 flex items-stretch text-white bg-linear-to-r from-[#23222f] from-0% via-[#202023] via-50% to-[#2b3244] to-85%">
    <button class="w-[60px] flex items-center justify-center" aria-label="开始"><svg width="20" height="20" viewBox="0 0 20 20" fill="#fff"><path d="M0 2.800 8 1.700v7.800H0zM9 1.500 20 0v9.500H9zM0 10.500h8v7.800L0 17.200zM9 10.500h11V20L9 18.500z"/></svg></button>
    <label class="w-[430px] flex items-center gap-3 pl-[14px] bg-[#f2f2f2] border border-[#c0c0c0] text-[#222]">
      <svg width="21" height="21" viewBox="0 0 21 21" fill="none" stroke="#222" stroke-width="1.500"><circle cx="13" cy="7.500" r="6.500"/><path d="M8.500 12.500 1 20"/></svg>
      <input type="text" placeholder="在这里输入你要搜索的内容" class="flex-1 outline-none text-[19px] placeholder:text-[#2d2d2d]" />
    </label>
    <div class="flex items-stretch bg-linear-to-r from-[#1c1c1e] via-[#34181f] to-[#2f3133]">
      <button class="w-[60px] flex items-center justify-center" aria-label="Cortana"><svg width="20" height="20"><circle cx="10" cy="10" r="8" fill="none" stroke="#fff" stroke-width="2.600"/></svg></button>
      <button class="w-[60px] flex items-center justify-center" aria-label="任务视图"><svg width="21" height="20" viewBox="0 0 21 20" fill="none" stroke="#fff" stroke-width="1.300"><path d="M1 0v3.500h13V0M1 6.500h13v7H1zM1 20v-3.500h13V20M19 0v5M19 10v10"/><path d="M17.500 6h3v3.500h-3z" fill="#fff" stroke="none"/></svg></button>
      <button class="relative w-[67px] flex items-center justify-center" aria-label="文件资源管理器">
        <svg width="28" height="24" viewBox="0 0 28 24"><path d="M0 0h11l2 2v5H0z" fill="#e09b0c"/><path d="M0 4h11l2-2h15v20H0z" fill="#fcd05e"/><path d="M5 24V14l2-2h14l2 2v10h-5v-7h-8v7z" fill="#3b97e0"/></svg>
        <span class="absolute bottom-0 left-[9px] w-[51px] h-[3px] bg-[#76b9ed] border-r-11 border-[#5c8fb6]"></span>
      </button>
      <button class="relative w-[58px] flex items-center justify-center" aria-label="QQ浏览器">
        <svg width="30" height="32" viewBox="0 0 30 32"><defs><linearGradient id="qq" x1="1" x2="0" y1="0" y2="1"><stop stop-color="#0d6cf0"/><stop offset=".5" stop-color="#2aa5f8"/><stop offset="1" stop-color="#e6f4ff"/></linearGradient></defs><circle cx="15" cy="15" r="11" fill="none" stroke="url(#qq)" stroke-width="6.500"/><path d="M14 31a5 5 0 0 1 0-9c2-4 8-4 9 0 8 0 8 9 2 9z" fill="#fff"/></svg>
        <span class="absolute bottom-0 left-1 w-[51px] h-[3px] bg-[#76b9ed] border-r-11 border-[#5c8fb6]"></span>
      </button>
      <button class="relative w-[65px] flex items-center justify-center" aria-label="2345浏览器">
        <svg width="29" height="30" viewBox="0 0 29 30"><circle cx="14.500" cy="15" r="14.500" fill="#35bdf3"/><path d="M8 12c1-6 12-7 13-1 0 4-12 4-14 9M22 18c-1 6-12 7-13 1 0-3 8-3 13-8" fill="none" stroke="#fff" stroke-width="3.500"/></svg>
        <span class="absolute bottom-0 left-2 w-[51px] h-[3px] bg-[#76b9ed] border-r-11 border-[#5c8fb6]"></span>
      </button>
    </div>
    <button class="w-[61px] flex items-center justify-center bg-[#4c4c4f] border-b-3 border-[#76b9ed]" aria-label="Adobe Illustrator">
      <span class="w-7 h-7 border-2 border-[#f57c00] bg-[#2b1400] text-[#ff7c00] text-[17px] leading-6 font-semibold">Ai</span>
    </button>
    <button class="relative w-[62px] flex items-center justify-center" aria-label="Microsoft Edge">
      <svg width="30" height="31" viewBox="0 0 30 31"><defs><linearGradient id="edge"><stop stop-color="#2aa8dc"/><stop offset=".6" stop-color="#36cbb8"/><stop offset="1" stop-color="#66e84e"/></linearGradient></defs><circle cx="15" cy="15.500" r="15" fill="#0c6fc8"/><path d="M0 13C2-3 29-5 30 13c0 7-8 10-12 7-2-2 1-3 0-6C16 7 4 5 0 13z" fill="url(#edge)"/><path d="M13 12c-8 3-6 15 3 18 6 1 11-3 13-7-6 4-14 2-14-5z" fill="#174e9d"/><path d="M15 13c-3 4-1 10 5 11 4 1 7-1 9-2l2-4c-4 4-10 4-12 1-2-2 0-3-1-5z" fill="#202023"/></svg>
      <span class="absolute bottom-0 left-[6px] w-[51px] h-[3px] bg-[#76b9ed] border-r-11 border-[#5c8fb6]"></span>
    </button>

    <div class="ml-auto flex items-center">
      <button class="flex items-center gap-3 text-xl leading-6 whitespace-nowrap">
        <svg width="28" height="20" viewBox="0 0 28 20"><path d="M6 19C-2 19-1 9 6 9 8-3 22-2 22 7c7 0 8 12 0 12z" fill="#c9e8fa"/><path d="M13 1c5-3 10 1 9 6 3 0 5 2 5 5-3-5-9-4-10-2 0-4-1-7-4-9z" fill="#4ea3e0"/></svg>
        <span>14°C 阴</span>
      </button>
      <button class="ml-[21px]" aria-label="显示隐藏的图标"><svg width="17" height="10" viewBox="0 0 17 10" fill="none" stroke="#fff" stroke-width="1.500"><path d="m1 9 7.500-7.500L16 9"/></svg></button>
      <button class="ml-[11px]" aria-label="更新"><svg width="21" height="20" viewBox="0 0 21 20" fill="none" stroke="#fff" stroke-width="1.300"><path d="M11 17 1 17.500v-14L20 1v11M6 9c1-5 6-5 7-3M13.500 3.500V7H10M13 11c-1 4-6 4-7 1M5.500 15v-3.500H9"/><circle cx="16" cy="15.500" r="4.500" fill="#2a73c8" stroke="none"/></svg></button>
      <button class="ml-[39px]" aria-label="音量"><svg width="20" height="18" viewBox="0 0 20 18" fill="none" stroke="#fff" stroke-width="1.300"><path d="M1 6h3l4-4v14l-4-4H1zM10.500 7c1 1 1 3 0 4"/><path d="M13 4.500c3 3 3 6 0 9M16 2c4 4 4 10 0 14" stroke="#777"/></svg></button>
      <button class="ml-[10px]" aria-label="电池"><svg width="20" height="15" viewBox="0 0 20 15" fill="none" stroke="#fff" stroke-width="1.300"><path d="M5 4h13v9H5V8M18 7h1.500v4H18M1 3h5v3c-1 2-4 2-5 0zM2 0v3M5 0v3"/><path d="M7 6h9v5H7z" fill="#fff"/></svg></button>
      <button class="ml-3 text-base font-bold">中</button>
      <button class="ml-[14px] w-[76px] whitespace-nowrap text-center text-[15px] leading-[23px]"><span class="block">7:32</span><span class="block">2022/4/30</span></button>
      <button class="relative ml-6 mr-6" aria-label="2 条新通知">
        <svg width="21" height="20" viewBox="0 0 21 20"><path d="M0 0h20v15h-8v4l-5-4H0z" fill="#fff"/><path d="M4 4h12M4 7.500h12M4 11h9" stroke="#2b3040" stroke-width="1.300"/></svg>
        <span class="absolute left-[9px] top-[9px] size-5 rounded-full border border-[#aaa] bg-[#2e3036] text-sm leading-[18px] font-bold text-center">2</span>
      </button>
      <div class="w-px h-full bg-[#888] mr-[5px]"></div>
    </div>
  </footer>

  <!-- Watermark over the whole desktop -->
  <div class="absolute right-[100px] bottom-10 w-[347px] h-[170px] pointer-events-none select-none text-white opacity-75">
    <div class="absolute left-0 bottom-[48px] flex items-end">
      <span class="text-[76px] leading-[76px] font-bold font-['Liberation_Sans',sans-serif] w-[118px]">Bai</span>
      <div class="relative w-[104px] h-[118px]">
        <svg width="100" height="110" viewBox="0 0 100 110" fill="#fff"><ellipse cx="14" cy="42" rx="12.500" ry="16.500"/><ellipse cx="38" cy="18" rx="12" ry="17"/><ellipse cx="68" cy="20" rx="12.500" ry="16.500"/><ellipse cx="88" cy="50" rx="12.500" ry="16"/><path d="M49 45c20 0 22 19 36 29 16 15 7 34-11 34-10 0-18-2-25-2s-15 3-24 2C6 107 2 91 14 76c10-10 17-31 35-31z"/></svg>
        <span class="absolute left-[20px] top-[61px] text-[48px] leading-10 font-bold text-[#555] font-['Liberation_Sans',sans-serif]">du</span>
      </div>
      <span class="text-[57px] leading-[76px] font-black font-['Noto_Sans_CJK_SC',sans-serif]">经验</span>
    </div>
    <span class="absolute left-[2px] bottom-0 text-[39px] leading-[50px] font-medium font-['Noto_Sans',sans-serif]">jingyan.baidu.com</span>
  </div>
</body>
</html>
